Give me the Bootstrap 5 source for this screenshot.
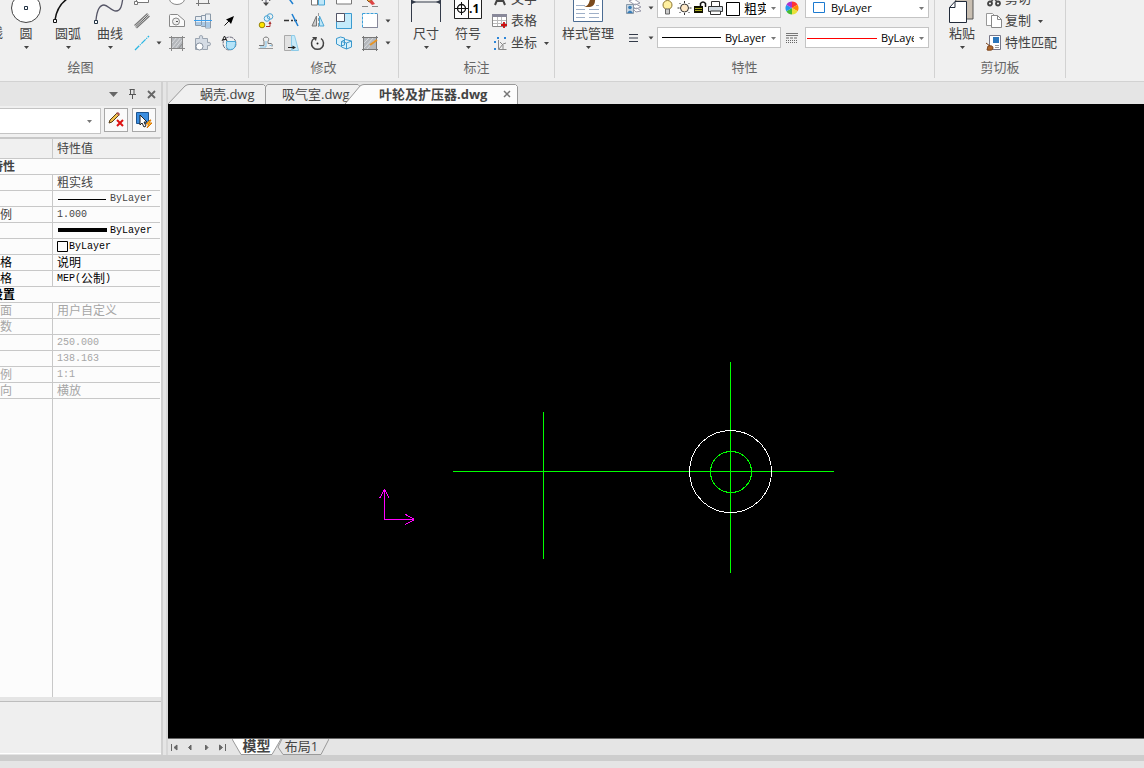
<!DOCTYPE html>
<html lang="zh-CN">
<head>
<meta charset="utf-8">
<meta name="viewport" content="width=device-width, initial-scale=1">
<title>叶轮及扩压器.dwg</title>
<link href="https://cdn.jsdelivr.net/npm/bootstrap@5.3.0/dist/css/bootstrap.min.css" rel="stylesheet">
<style>
:root { --face:#f0f0f0; --strip:#e5e5e5; --rule:#c8c8c8; --ink:#444; }
body { font-family:"Open Sans","Noto Sans CJK SC",sans-serif; font-size:13px; line-height:14px; color:var(--ink); background:var(--strip); }
button { border:0; padding:0; background:none; color:inherit; }
svg { display:block; flex:none; fill:none; stroke-width:1; }
.caret { width:11px; height:14px; fill:#444; stroke:none; }
/* ribbon */
.ribbon { height:82px; background:var(--face); border-bottom:1px solid #d2d2d2; }
.r-group { height:78px; border-right:1px solid #d2d2d2; flex:none; }
.r-tools { height:54px; }
.r-pad { padding-left:6px; }
.r-title { height:24px; padding-top:3px; line-height:20px; color:#666; }
.g-draw { width:249px; } .g-draw .r-title { width:161px; }
.g-modify { width:150px; } .g-note { width:156px; } .g-prop { width:380px; } .g-clip { width:131px; }
.big-btn { width:42px; flex:none; white-space:nowrap; line-height:13px; }
.big-btn.wide { width:54px; }
.edge-btn { width:5px; height:28px; flex:none; overflow:hidden; direction:rtl; padding-right:2px; line-height:13px; display:flex; align-items:flex-start; }
.big-btn svg:first-child { height:36px; width:100%; }
.tool-grid { display:grid; grid-auto-rows:22px; }
.cols-draw { grid-template-columns:22px 11px repeat(3,26px); }
.cols-mod { grid-template-columns:repeat(5,26px) 9px; }
.tool-grid svg { width:100%; height:22px; }
.row-btn { height:22px; white-space:nowrap; line-height:20px; align-items:flex-start; }
.row-btn svg:first-child { width:22px; height:22px; }
.row-btn .caret { margin-top:4px; }
.prop-rows { gap:9px; padding-bottom:6px; margin-left:5px; }
.prop-row { height:21px; }
.p-icon { width:26px; height:21px; }
.p-icon2 { width:24px; height:21px; }
.combo { width:124px; height:21px; background:#fff; border:1px solid #c4c4c4; flex:none; }
select { appearance:none; border:0; padding:0; margin:0; background:transparent; color:#000; min-width:0; font-family:"Open Sans","Noto Sans CJK SC",sans-serif; font-size:11px; outline-offset:-1px; }
.pick-cjk { font-size:13px; margin-left:4px; }
.combo .caret { width:14px; fill:#777; }
/* property panel */
.side { width:168px; background:var(--strip); border-right:2px solid #d7d7d7; padding-right:3px; flex:none; }
.side-in { border-right:2px solid #d0d0d0; }
.side-head { height:24px; }
.side-head button { width:19px; }
.side-bar { height:31px; padding:2px 5px 0 0; background:var(--face); gap:4px; }
.side-bar .combo { width:101px; height:26px; border-left:0; margin-right:-1px; }
.sq-btn { width:24px; height:24px; border:1px solid #a8a8a8; background:#fafafa; }
.sq-btn svg { width:22px; height:22px; }
.prop-box { background:#fcfcfc; border-top:2px solid var(--rule); border-right:1px solid #fff; }
.prop-table { width:100%; table-layout:fixed; border-collapse:separate; border-spacing:0; font-size:12px; line-height:15px; }
.prop-table td, .prop-table th { height:16px; padding:0; border-bottom:1px solid var(--rule); font-weight:400; white-space:nowrap; }
.prop-table .k { width:53px; border-right:1px solid var(--rule); }
.prop-table td + td, .prop-table th + th { padding-left:4px; }
.prop-table thead th { height:20px; background:var(--face); }
.prop-table b { display:flex; justify-content:flex-end; width:15px; overflow:hidden; }
.val { display:flex; align-items:center; height:15px; }
.mono { font-family:"Liberation Mono",monospace; font-size:10px; }
.blk { color:#000; } .dim { color:#a6a6a6; }
.rest-k { width:53px; border-right:1px solid var(--rule); }
.tip-box { height:53px; border-top:1px solid #bdbdbd; border-bottom:1px solid #fff; background:#efefef; margin-top:4px; margin-bottom:1px; }
/* documents */
.doc-tabs { height:22px; padding-top:2px; }
.doc-tab { position:relative; height:20px; white-space:nowrap; text-align:left; isolation:isolate; line-height:18px; }
.tab-shape { position:absolute; left:0; top:0; z-index:-1; height:100%; width:100%; stroke:#999; }
.t-one { width:98px; padding-left:32px; } .t-two { width:97px; padding-left:16px; }
.t-three { width:173px; padding-left:34px; margin-left:-18px; font-weight:700; }
.x-btn { margin-left:14px; }
.canvas { background:#000; min-height:0; }
.canvas svg { width:100%; height:100%; shape-rendering:crispEdges; }
.sheet-bar { height:17px; border-top:1px solid #666; }
.sheet-nav { width:16px; height:16px; }
.sheet-nav svg { fill:#666; stroke:#666; }
.sheet { height:16px; position:relative; isolation:isolate; line-height:12px; padding-bottom:3px; }
.s-one { width:49px; font-weight:700; font-size:14px; } .s-two { width:55px; margin-left:-7px; }
.foot { height:13px; border-top:6px solid #cdcdcd; }
</style>
</head>
<body>
<div class="vh-100 d-flex flex-column overflow-hidden">

<header class="ribbon d-flex flex-shrink-0 overflow-hidden">
  <section class="r-group g-draw">
    <div class="r-tools d-flex align-items-end">
      <button class="edge-btn">线</button>
      <button class="big-btn d-flex flex-column align-items-center">
        <svg viewBox="5 -10 42 36"><circle cx="26" cy="7" r="14.500" fill="#fff" stroke="#444"/><path d="M24.500 5.500h3v3h-3z" stroke="#234"/></svg>圆<svg class="caret" viewBox="0 0 11 14"><path d="M3 6h5L5.500 9z"/></svg></button>
      <button class="big-btn d-flex flex-column align-items-center">
        <svg viewBox="47 -10 42 36"><path d="M55 19Q57 5 67-2" stroke="#111" stroke-width="1.500"/><path d="M53.500 18.500h3v3h-3z" fill="#fff" stroke="#111"/></svg>圆弧<svg class="caret" viewBox="0 0 11 14"><path d="M3 6h5L5.500 9z"/></svg></button>
      <button class="big-btn d-flex flex-column align-items-center">
        <svg viewBox="89 -10 42 36"><path d="M96 19C97 9 100 4 104 4S111 10 116 10 122 4 123-4" stroke="#556" stroke-width="1.300"/><path d="M94.500 19.500h3v3h-3z" fill="#fff" stroke="#234"/></svg>曲线<svg class="caret" viewBox="0 0 11 14"><path d="M3 6h5L5.500 9z"/></svg></button>
      <div class="tool-grid cols-draw">
        <button aria-label="矩形"><svg viewBox="131 -12 22 22"><path d="M136.500-5H148.500V2.500H136.500z" fill="#fff" stroke="#777"/><path d="M134.500 1.500h3v3h-3z" fill="#fff" stroke="#777"/></svg></button><span></span>
        <button aria-label="椭圆"><svg viewBox="164 -12 26 22"><ellipse cx="177" cy="-1" rx="7.500" ry="5.500" fill="#fff" stroke="#888"/></svg></button>
        <button aria-label="轴线"><svg viewBox="190 -12 26 22"><path d="M198.500-5V6M208.500-5V4M196 3.500H210" stroke="#777"/></svg></button><span></span>
        <button aria-label="平行线"><svg viewBox="131 10 22 22"><path d="M134.500 25.500L147.500 13.500M136.500 28L149.500 16" stroke="#777" stroke-width="1.200"/><path d="M135.500 26.800L148.500 14.800" stroke="#555"/></svg></button><span></span>
        <button aria-label="公式曲线"><svg viewBox="164 10 26 22"><path d="M169.500 15.500Q169.500 14.500 170.500 14.500H177.500L184.500 20.500V26.500H169.500z" fill="#fafafa" stroke="#888"/><circle cx="176" cy="21.500" r="3.500" fill="#eee" stroke="#888"/><path d="M176 21.500h2" stroke="#555"/></svg></button>
        <button aria-label="轴孔"><svg viewBox="190 10 26 22"><path d="M195.500 16.500h6v-1h4v-1.500h5v14h-5v-1.500h-4v-1h-6z" fill="#e9eef3" stroke="#8a99a8"/><path d="M196 22h14v5.500h-5v-1.500h-4v-1h-5z" fill="#a9c8e4"/><path d="M201.500 16v9M205.500 14v13" stroke="#8b9aab"/><path d="M194 20.500H212" stroke="#3aa0f0"/></svg></button>
        <button aria-label="箭头"><svg viewBox="216 10 26 22"><path d="M224.500 25.500L229 21" stroke="#111"/><path d="M226 19.500L234 16L231 24L229 21.500z" fill="#000"/></svg></button>
        <button aria-label="中心线"><svg viewBox="131 32 22 22"><path d="M135 50L149 36" stroke="#29b6e3" stroke-width="1.300" stroke-dasharray="6 1 1 1"/></svg></button>
        <svg class="caret" viewBox="153 32 11 22"><path d="M156.500 41.500h5l-2.500 3z"/></svg>
        <button aria-label="剖面线"><svg viewBox="164 32 26 22"><path d="M171 37h12v12h-12z" fill="#b4b7bb"/><path d="M172 43l5-6M172 48l9-11M175 49l7-9" stroke="#d8dadd"/><path d="M171.500 36v15M182.500 36v15M169 37.500h16M169 48.500h16M178 49l5-6" stroke="#888"/></svg></button>
        <button aria-label="图库"><svg viewBox="190 32 26 22"><path d="M195.500 49.500V38.500h4q-1-3 1.500-3t1.500 3h5v4q3-1 3 1.500t-3 1.500v4h-5v-3h-4v3z" fill="#d5dce5" stroke="#9aa4b0"/><circle cx="199.500" cy="46.500" r="3.500" fill="#fff" stroke="#8792a0"/></svg></button>
        <button aria-label="局部放大"><svg viewBox="216 32 26 22"><circle cx="229.500" cy="43.500" r="6.500" stroke="#667" stroke-dasharray="4 1"/><path d="M226.500 41.500h9v2q0 6-5 6t-4-5z" fill="#b5e3f8" stroke="#49a6d5"/><path d="M222 41l2.500-5 2.500 5M223 39.500h3" stroke="#222"/></svg></button>
      </div>
    </div>
    <div class="r-title text-center">绘图</div>
  </section>

  <section class="r-group g-modify">
    <div class="r-tools d-flex align-items-end ps-1">
      <div class="tool-grid cols-mod">
        <button aria-label="移动"><svg viewBox="253 -12 26 22"><path d="M266-8V4" stroke="#556"/><path d="M263 2.500h6l-3 3.500zM261 0l2-1v2zM271 0l-2-1v2z" fill="#444"/></svg></button>
        <button aria-label="裁剪"><svg viewBox="279 -12 26 22"><path d="M287-4L293 4" stroke="#1d7fd1" stroke-width="1.500"/></svg></button>
        <button aria-label="阵列"><svg viewBox="305 -12 26 22"><path d="M311.500-4h6v9h-6z" fill="#fff" stroke="#777"/><path d="M318.500-4h6v9h-6z" fill="#bfe6f8" stroke="#49a6d5"/></svg></button>
        <button aria-label="拉伸"><svg viewBox="331 -12 26 22"><path d="M336.500-6h15v10h-15z" fill="#fff" stroke="#777"/></svg></button>
        <button aria-label="删除"><svg viewBox="357 -12 26 22"><path d="M364-3l5-2 3 5-3 2z" fill="#e9a23b" stroke="#84501e"/><path d="M369 2l3-2 3 4-3 1z" fill="#d44"/><path d="M362 6.500h6M372 6.500h6" stroke="#888"/></svg></button><span></span>
        <button aria-label="复制"><svg viewBox="253 10 26 22"><circle cx="262" cy="25" r="2.800" fill="#ffe600" stroke="#97850a"/><circle cx="267" cy="18.500" r="2.800" fill="#e0f2fb" stroke="#4ba3d2"/><circle cx="270" cy="16.500" r="2.800" stroke="#4ba3d2"/><path d="M266 26.500h4v-4" stroke="#a33"/><path d="M268.500 24l1.500-3 1.500 3z" fill="#a33"/></svg></button>
        <button aria-label="延伸"><svg viewBox="279 10 26 22"><path d="M284 20.500h5M291 20.500h2M294 20.500h3" stroke="#333" stroke-width="1.500"/><path d="M292 14l6 12" stroke="#1d7fd1" stroke-width="1.500"/></svg></button>
        <button aria-label="镜像"><svg viewBox="305 10 26 22"><path d="M316.500 16v10h-4.500z" fill="#ccc" stroke="#777"/><path d="M319.500 16v10h4.500z" fill="#bfe6f8" stroke="#49a6d5"/><path d="M318.500 13v3m0 2v3m0 2v4" stroke="#999"/></svg></button>
        <button aria-label="缩放"><svg viewBox="331 10 26 22"><path d="M336.500 13.500h15v15h-15z" fill="#c4ebfb" stroke="#3b9bd0"/><path d="M336.500 13.500h8v8h-8z" fill="#fff" stroke="#556"/></svg></button>
        <button aria-label="打断"><svg viewBox="357 10 26 22"><path d="M362.500 13.500h15v14h-15z" fill="#fff" stroke="#3ba0da" stroke-dasharray="3 1"/><path d="M363 27.500h14.500V14" stroke="#889"/></svg></button>
        <svg class="caret" viewBox="382 10 9 22"><path d="M384.500 19.500h5l-2.500 3z"/></svg>
        <button aria-label="偏移"><svg viewBox="253 32 26 22"><path d="M258.500 48.500H273" stroke="#999"/><path d="M259 45.500h5v-4q-2-4 2-4.500 4 .500 2 4.500v2h3q2 .500 1 3" stroke="#777"/><path d="M260 47h6v-6M269.500 45.500h2" stroke="#7cc0e6"/></svg></button>
        <button aria-label="拉伸面"><svg viewBox="279 32 26 22"><path d="M284.500 35.500h7v15h-7z" fill="#e2e2e2" stroke="#aaa"/><path d="M291.500 35.500h3l4 15h-7z" fill="#c7e9f8" stroke="#8ccbe8"/><path d="M288 47.500h5" stroke="#222"/><path d="M292.500 45.500l3.500 2-3.500 2z" fill="#222"/></svg></button>
        <button aria-label="旋转"><svg viewBox="305 32 26 22"><path d="M314 38.500a6 6 0 1 0 7 0" stroke="#444" stroke-width="1.500"/><path d="M312 37h5l-1 4z" fill="#444"/><circle cx="317.500" cy="43.500" r="1" fill="#222"/></svg></button>
        <button aria-label="三维"><svg viewBox="331 32 26 22"><path d="M336.500 38.500l4-1.500 4 1v7l-4 1-4-2zM341.500 41.500l4-2 6 1.500v6l-5 2-5-2zM341.500 41.500l5 1.500 5-2M346.500 43v6" fill="#d9f1fb" stroke="#3b98cd"/></svg></button>
        <button aria-label="编辑填充"><svg viewBox="357 32 26 22"><path d="M363 37h14v12h-14z" fill="#b4b7bb"/><path d="M364 43l6-6M364 48l10-11M367 49l7-8" stroke="#d8dadd"/><path d="M363.500 36v15M376.500 36v15M362 37.500h16M362 49.500h16" stroke="#777"/><path d="M370 45l7-5" stroke="#e69323" stroke-width="2"/></svg></button>
        <svg class="caret" viewBox="382 32 9 22"><path d="M384.500 41.500h5l-2.500 3z"/></svg>
      </div>
    </div>
    <div class="r-title text-center">修改</div>
  </section>

  <section class="r-group g-note">
    <div class="r-tools r-pad d-flex align-items-end">
      <button class="big-btn d-flex flex-column align-items-center">
        <svg viewBox="405 -10 42 36"><path d="M411.500-5V21M440.500-5V21M411 1h29" stroke="#333b49"/><path d="M412-1l4 2-4 2zM440-1l-4 2 4 2z" fill="#333b49"/></svg>尺寸<svg class="caret" viewBox="0 0 11 14"><path d="M3 6h5L5.500 9z"/></svg></button>
      <button class="big-btn d-flex flex-column align-items-center">
        <svg viewBox="447 -10 42 36"><path d="M454.500-5V17.500H481.500V-5M468.500-5V17" fill="#fff" stroke="#222"/><circle cx="461.500" cy="7.500" r="4" stroke="#111" stroke-width="1.300"/><path d="M461.500 1v13M455 7.500h13" stroke="#111"/><text x="469" y="12" fill="#000" font-family="Open Sans" font-size="12" font-weight="700">.1</text></svg>符号<svg class="caret" viewBox="0 0 11 14"><path d="M3 6h5L5.500 9z"/></svg></button>
      <div>
        <button class="row-btn d-flex"><svg viewBox="489 -12 22 22"><path d="M495 5l5-12 5 12M497 1h6" stroke="#444" stroke-width="2"/></svg>文字</button>
        <button class="row-btn d-flex"><svg viewBox="489 10 22 22"><path d="M492.500 14.500h14v12h-14z" fill="#fff" stroke="#888"/><path d="M492 14h15v3h-15z" fill="#889"/><path d="M493 20.500h13M493 23.500h13M497.500 17v9M501.500 17v9" stroke="#bbb"/><path d="M504 22v6M501 25h6" stroke="#c11" stroke-width="1.800"/></svg>表格</button>
        <button class="row-btn d-flex"><svg viewBox="489 32 22 22"><path d="M498.500 40v9.500h8M499 49l4-5 3-1M500 42l3 3v4" stroke="#888"/><path d="M494 41l2 2m0-2l-2 2m0 5l2 2m0-2l-2 2M497 37l2 2m0-2l-2 2m7-2l2 2m0-2l-2 2" stroke="#2d86d8"/></svg>坐标<svg class="caret ms-1" viewBox="2 0 7 14"><path d="M3 6h5L5.500 9z"/></svg></button>
      </div>
    </div>
    <div class="r-title text-center">标注</div>
  </section>

  <section class="r-group g-prop">
    <div class="r-tools r-pad d-flex align-items-end">
      <button class="big-btn wide d-flex flex-column align-items-center">
        <svg viewBox="562 -10 54 36"><path d="M574.500-6H603.500V20.500H574.500z" fill="#fff" stroke="#4b6c93"/><path d="M577 4.500h9M577 8.500h9M577 12.500h9M577 16.500h9M590 8.500h10M590 12.500h10M590 16.500h10M597 4.500h3" stroke="#9fb0c8"/><path d="M585 6q5-1 6-8l5-2q1 9-5 10z" fill="#7b4a1c"/></svg>样式管理<svg class="caret" viewBox="0 0 11 14"><path d="M3 6h5L5.500 9z"/></svg></button>
      <div class="prop-rows d-flex flex-column">
        <div class="prop-row d-flex align-items-center">
          <button aria-label="图层"><svg class="p-icon" viewBox="620 -3 26 21"><path d="M629 1l5-2 6 4-5 2zM631 5l5-1 5 3-5 2zM633 9l4-1 4 3-5 1z" fill="#fff" stroke="#99a"/><path d="M626.500 4.500h7v9h-7z" fill="#c9d6e2" stroke="#8b9aa9"/><circle cx="630" cy="7.500" r="1.800" fill="#377db8"/><path d="M627 13q3-5 6 0z" fill="#377db8"/></svg></button>
          <svg class="caret" viewBox="0 0 11 14"><path d="M2.500 5.500h5l-2.500 3z"/></svg>
          <div class="combo d-flex align-items-center">
            <svg width="82" height="19" viewBox="658 -2 82 19"><circle cx="667.500" cy="5" r="4.500" fill="#fff0a0" stroke="#8b7430"/><path d="M665.500 9h4v5h-4z" fill="#ccc" stroke="#666"/><circle cx="684.500" cy="8" r="4" fill="#ffe9c8" stroke="#333"/><path d="M684.500 1v2m0 10v2m-7-7h2m10 0h2m-12-5l1 1m8 8l1 1m0-10l-1 1m-8 8l-1 1" stroke="#333"/><path d="M694 6h9v7h-9z" fill="#110"/><path d="M695 8.500h7M695 10.500h7" stroke="#a9a920"/><path d="M700.500 6V3.500q2.500-3 5 0V7" stroke="#111" stroke-width="1.500"/><path d="M711.500 6V1.500h8V6" fill="#fff" stroke="#333"/><path d="M708.500 6.500h14v5h-14z" fill="#d5dde4" stroke="#333"/><path d="M710.500 11h10v3.500h-10z" fill="#fff" stroke="#333"/><path d="M726.500 2.500h13v13h-13z" fill="#fff" stroke="#000"/></svg>
            <select class="flex-grow-1 pick-cjk" aria-label="图层名"><option>粗实线</option></select><svg class="caret" viewBox="0 0 14 14"><path d="M5 6h5L7.500 9z"/></svg></div>
          <button aria-label="颜色"><svg class="p-icon2" viewBox="781 -3 24 21"><path d="M792 8V1.500A6.500 6.500 0 0 1 797.600 4.700z" fill="#f33"/><path d="M792 8l5.600-3.300a6.500 6.500 0 0 1 0 6.600z" fill="#f80"/><path d="M792 8l5.600 3.300a6.500 6.500 0 0 1-5.600 3.200z" fill="#e8e13a"/><path d="M792 8v6.500a6.500 6.500 0 0 1-5.600-3.200z" fill="#4b3"/><path d="M792 8l-5.600 3.300a6.500 6.500 0 0 1 0-6.600z" fill="#29e"/><path d="M792 8l-5.600-3.300A6.500 6.500 0 0 1 792 1.500z" fill="#a3c"/></svg></button>
          <div class="combo d-flex align-items-center"><svg width="25" height="19" viewBox="806 -2 25 19"><path d="M813.500 2.500h11v10h-11z" fill="#fff" stroke="#1c7ad0"/></svg><select class="flex-grow-1" aria-label="颜色"><option>ByLayer</option></select><svg class="caret" viewBox="0 0 14 14"><path d="M5 6h5L7.500 9z"/></svg></div>
        </div>
        <div class="prop-row d-flex align-items-center">
          <button aria-label="线宽"><svg class="p-icon" viewBox="620 27 26 21"><path d="M629 34.500h9M629 38h9M629 41.500h9" stroke="#333b49"/></svg></button>
          <svg class="caret" viewBox="0 0 11 14"><path d="M2.500 5.500h5l-2.500 3z"/></svg>
          <div class="combo d-flex align-items-center"><svg width="67" height="19"><path d="M4 9.500h59" stroke="#000"/></svg><select class="flex-grow-1" aria-label="线宽"><option>ByLayer</option></select><svg class="caret" viewBox="0 0 14 14"><path d="M5 6h5L7.500 9z"/></svg></div>
          <button aria-label="线型"><svg class="p-icon2" viewBox="781 27 24 21"><path d="M786 33.500h12M786 35.500h12" stroke="#777"/><path d="M786 38h12" stroke="#666" stroke-dasharray="3 1"/><path d="M786 40.500h12M786 42.500h12" stroke="#666" stroke-dasharray="1 1"/></svg></button>
          <div class="combo d-flex align-items-center"><svg width="75" height="19"><path d="M1 10.500h70" stroke="#f00"/></svg><select class="flex-grow-1" aria-label="线型"><option>ByLayer</option></select><svg class="caret" viewBox="0 0 14 14"><path d="M5 6h5L7.500 9z"/></svg></div>
        </div>
      </div>
    </div>
    <div class="r-title text-center">特性</div>
  </section>

  <section class="r-group g-clip">
    <div class="r-tools r-pad d-flex align-items-end">
      <button class="big-btn d-flex flex-column align-items-center">
        <svg viewBox="941 -10 42 36"><path d="M954.500-6H973V18H960z" fill="#c9bfb2" stroke="#555"/><path d="M949.500 6.500L955 .500H966.500V21.500H949.500z" fill="#fff" stroke="#222b3a"/><path d="M949.500 6.500H955V.500" stroke="#222b3a"/></svg>粘贴<svg class="caret" viewBox="0 0 11 14"><path d="M3 6h5L5.500 9z"/></svg></button>
      <div>
        <button class="row-btn d-flex"><svg viewBox="983 -12 22 22"><path d="M990-7l7 9M998-7l-7 9" stroke="#555" stroke-width="1.500"/><circle cx="990" cy="3.500" r="2" stroke="#444" stroke-width="1.800"/><circle cx="998" cy="3.500" r="2" stroke="#444" stroke-width="1.800"/></svg>剪切</button>
        <button class="row-btn d-flex"><svg viewBox="983 10 22 22"><path d="M986.500 13.500h6l3 3v9h-9z" fill="#fff" stroke="#999"/><path d="M991.500 15.500h6l4 4v8h-10z" fill="#fff" stroke="#888"/><path d="M997.500 15.500v4h4" stroke="#888"/></svg>复制<svg class="caret ms-1" viewBox="2 0 7 14"><path d="M3 6h5L5.500 9z"/></svg></button>
        <button class="row-btn d-flex"><svg viewBox="983 32 22 22"><path d="M989.500 35.500h11v14h-11z" fill="#fff" stroke="#778"/><path d="M993 37h6v6h-6z" fill="#2b76bb"/><path d="M995 45.500h4M995 47.500h4" stroke="#999"/><path d="M986 43l4 3" stroke="#7b421a"/><path d="M988 46q5-1 5 2t-6 2z" fill="#b0682a" stroke="#7b421a"/></svg>特性匹配</button>
      </div>
    </div>
    <div class="r-title text-center">剪切板</div>
  </section>
</header>

<div class="d-flex flex-grow-1 overflow-hidden">
  <aside class="side">
    <div class="side-in h-100 d-flex flex-column">
      <div class="side-head d-flex justify-content-end align-items-center">
        <button aria-label="菜单"><svg width="19" height="16"><path d="M5 6h9l-4.500 5z" fill="#666"/></svg></button>
        <button aria-label="固定"><svg width="19" height="16"><path d="M7.500 3v5M6.500 3.500h5M11 3v5M6 8.500h7M9.500 9v4" stroke="#555"/></svg></button>
        <button aria-label="关闭"><svg width="19" height="16"><path d="M6 5l7 7M13 5l-7 7" stroke="#666" stroke-width="1.800"/></svg></button>
      </div>
      <div class="side-bar d-flex">
        <div class="combo d-flex align-items-center"><select class="flex-grow-1" aria-label="选择对象"><option></option></select><svg class="caret me-1" viewBox="0 0 14 14"><path d="M5 6h5L7.500 9z"/></svg></div>
        <button class="sq-btn" aria-label="清除选择"><svg viewBox="105 109 22 22"><path d="M109 123l1-3 7-7 2 2-7 7z" fill="#f2c04d" stroke="#553c18"/><path d="M116 113l2-1 2 2-1 2z" fill="#a55"/><path d="M117 120l6 6M123 120l-6 6" stroke="#d11" stroke-width="2"/></svg></button>
        <button class="sq-btn" aria-label="快速选择"><svg viewBox="133 109 22 22"><path d="M136.500 112.500h12v11h-12z" fill="#3a8de0" stroke="#1c5490"/><path d="M140 115v10l2-2 2 4 2-1-2-4h3z" fill="#fff" stroke="#222"/><path d="M150 120l-4 4h3l-2 4 5-5h-3l2-3z" fill="#fc3" stroke="#d70"/></svg></button>
      </div>
      <div class="prop-box flex-grow-1 d-flex flex-column">
        <table class="prop-table">
          <thead><tr><th class="k"></th><th>特性值</th></tr></thead>
          <tbody>
            <tr><td colspan="2"><b class="val">特性</b></td></tr>
            <tr><td class="k"></td><td><span class="val">粗实线</span></td></tr>
            <tr><td class="k"></td><td><span class="val"><svg width="53" height="15"><path d="M1 8.500h48" stroke="#000"/></svg><span class="mono">ByLayer</span></span></td></tr>
            <tr><td class="k"><span class="val">例</span></td><td><span class="val mono">1.000</span></td></tr>
            <tr class="blk"><td class="k"></td><td><span class="val"><svg width="53" height="15"><path d="M1 7h49" stroke="#000" stroke-width="4"/></svg><span class="mono">ByLayer</span></span></td></tr>
            <tr class="blk"><td class="k"></td><td><span class="val"><svg width="12" height="15"><path d="M.500 2.500h10v10h-10z" stroke="#000"/></svg><span class="mono">ByLayer</span></span></td></tr>
            <tr class="blk"><td class="k"><span class="val">格</span></td><td><span class="val">说明</span></td></tr>
            <tr class="blk"><td class="k"><span class="val">格</span></td><td><span class="val"><span class="mono">MEP(</span>公制<span class="mono">)</span></span></td></tr>
            <tr class="blk"><td colspan="2"><b class="val">设置</b></td></tr>
            <tr class="dim"><td class="k"><span class="val">面</span></td><td><span class="val">用户自定义</span></td></tr>
            <tr class="dim"><td class="k"><span class="val">数</span></td><td></td></tr>
            <tr class="dim"><td class="k"></td><td><span class="val mono">250.000</span></td></tr>
            <tr class="dim"><td class="k"></td><td><span class="val mono">138.163</span></td></tr>
            <tr class="dim"><td class="k"><span class="val">例</span></td><td><span class="val mono">1:1</span></td></tr>
            <tr class="dim"><td class="k"><span class="val">向</span></td><td><span class="val">横放</span></td></tr>
          </tbody>
        </table>
        <div class="rest-k flex-grow-1"></div>
      </div>
      <div class="tip-box flex-shrink-0"></div>
    </div>
  </aside>

  <main class="flex-fill d-flex flex-column overflow-hidden">
    <nav class="doc-tabs d-flex flex-shrink-0">
      <button class="doc-tab t-one"><svg class="tab-shape" viewBox="0 0 98 20"><path d="M0 20L17 2q2-1.500 4-1.500H95.500l2 2V20" fill="#f0f0f0"/></svg>蜗壳.dwg</button>
      <button class="doc-tab t-two"><svg class="tab-shape" viewBox="0 0 97 20"><path d="M-.500 20V3l2-2.500H92l4 4V20" fill="#f0f0f0"/></svg>吸气室.dwg</button>
      <div class="doc-tab t-three d-flex align-items-center"><svg class="tab-shape" viewBox="0 0 173 20"><path d="M0 20L15 2q2-1.500 4-1.500H170.500l2 2V20" fill="#fcfcfc"/></svg><button class="fw-bold">叶轮及扩压器.dwg</button><button class="x-btn" aria-label="关闭"><svg width="12" height="12"><path d="M3 3l6 6M9 3L3 9" stroke="#777" stroke-width="1.500"/></svg></button></div>
    </nav>
    <div class="canvas flex-grow-1">
      <svg><g transform="translate(-168 -104)">
        <path d="M543.500 412v147M730.500 362v211M453 471.500h381" stroke="#0f0"/>
        <circle cx="731" cy="472" r="20.500" stroke="#0f0"/>
        <circle cx="730.500" cy="471.500" r="41" stroke="#fff"/>
        <path d="M384.500 490v29.500H414M384.500 489.500l-5 9M384.500 489.500l5 9M414.500 519.500l-9-5M414.500 519.500l-9 5" stroke="#f0f"/>
      </g></svg>
    </div>
    <nav class="sheet-bar d-flex flex-shrink-0">
      <button class="sheet-nav" aria-label="第一页"><svg width="16" height="16"><path d="M3.500 5v7"/><path d="M9 6v5L6 8.500z"/></svg></button>
      <button class="sheet-nav" aria-label="上一页"><svg width="16" height="16"><path d="M7 6v5L4.500 8.500z"/></svg></button>
      <button class="sheet-nav" aria-label="下一页"><svg width="16" height="16"><path d="M5.500 6v5L8 8.500z"/></svg></button>
      <button class="sheet-nav" aria-label="最后一页"><svg width="16" height="16"><path d="M3.500 6v5l3-2.500zM9.500 5v7"/></svg></button>
      <button class="sheet s-one"><svg class="tab-shape" viewBox="0 0 49 16"><path d="M0 0l9 15.500h31L49 0" fill="#fff"/></svg>模型</button>
      <button class="sheet s-two"><svg class="tab-shape" viewBox="0 0 55 16"><path d="M4 8l5 7.500h38L55 0M4 8L8 0"/></svg>布局1</button>
    </nav>
  </main>
</div>
<footer class="foot flex-shrink-0"></footer>
</div>
<script src="https://cdn.jsdelivr.net/npm/bootstrap@5.3.0/dist/js/bootstrap.bundle.min.js"></script>
</body>
</html>
